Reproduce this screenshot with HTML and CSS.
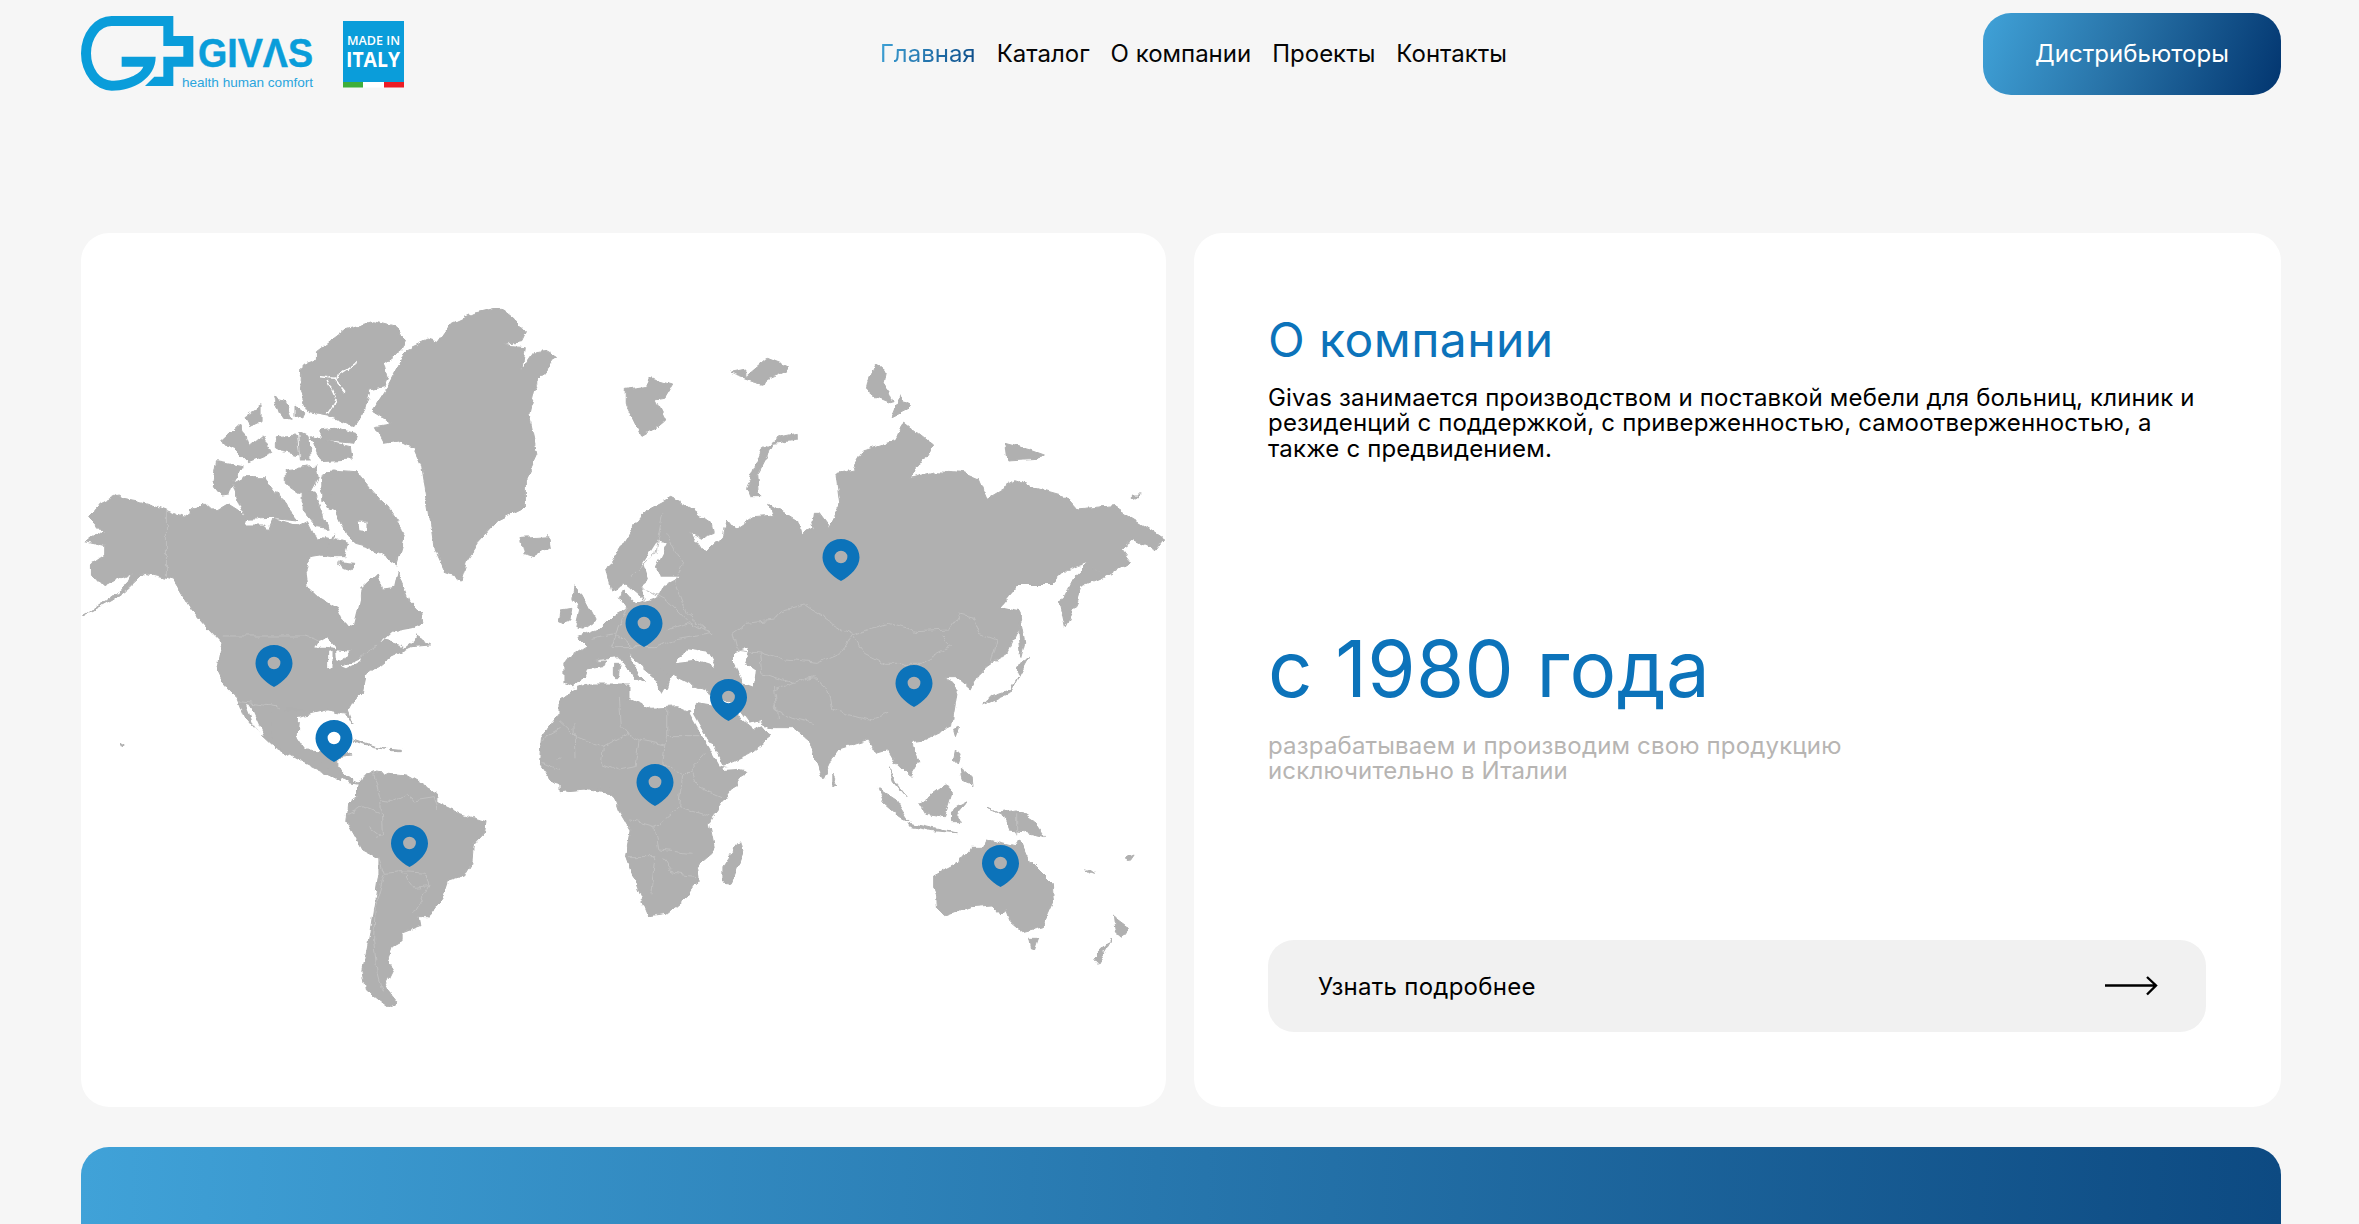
FILE: index.html
```html
<!DOCTYPE html>
<html lang="ru">
<head>
<meta charset="utf-8">
<title>Givas</title>
<link rel="stylesheet" href="styles.css">
</head>
<body>
<div class="page">
  <header class="header">
    <svg class="logo" viewBox="81 0 323 108" aria-label="Givas">
      <g transform="translate(75 10) scale(.33333)">
        <path class="logo-blue" d="M295,18 H110 A92,112 0 0 0 110,242 C175,242 242,205 242,140 H140 V170 H205 C195,195 150,212 110,212 A62,82 0 0 1 110,48 H265 V108 H325 V140 H265 V200 H238 L210,228 H295 V170 H355 V78 H295 Z"/>
      </g>
      <text class="logo-name" x="198" y="67" textLength="115" lengthAdjust="spacingAndGlyphs">GIVΛS</text>
      <text class="logo-tag" x="182" y="87" textLength="131" lengthAdjust="spacingAndGlyphs">health human comfort</text>
      <rect class="logo-blue-b" x="343" y="21" width="61" height="61"/>
      <rect class="flag-g" x="343" y="82" width="20" height="5.5"/>
      <rect class="flag-w" x="363" y="82" width="21" height="5.5"/>
      <rect class="flag-r" x="384" y="82" width="20" height="5.5"/>
      <text class="made" x="347" y="45" textLength="53" lengthAdjust="spacingAndGlyphs">MADE IN</text>
      <text class="italy" x="346" y="67" textLength="54" lengthAdjust="spacingAndGlyphs">ITALY</text>
    </svg>
    <nav class="nav">
      <a class="nav-link nav-active">Главная</a>
      <a class="nav-link">Каталог</a>
      <a class="nav-link">О компании</a>
      <a class="nav-link">Проекты</a>
      <a class="nav-link">Контакты</a>
    </nav>
    <a class="dist-btn">Дистрибьюторы</a>
  </header>

  <main class="cards">
    <section class="card map-card">
      <svg class="map" viewBox="81 233 1085 874">
        <defs>
          <filter id="coast" x="0" y="0" width="100%" height="100%" filterUnits="objectBoundingBox">
            <feTurbulence type="fractalNoise" baseFrequency="0.09" numOctaves="3" seed="4" result="n"/>
            <feDisplacementMap in="SourceGraphic" in2="n" scale="7" xChannelSelector="R" yChannelSelector="G"/>
          </filter>
          <path id="pin" fill-rule="evenodd" d="M18.5,0 C29,0 37,8 37,18.5 C37,28 28,37 18.5,42 C9,37 0,28 0,18.5 C0,8 8,0 18.5,0 Z M18.5,11.8 A6.4,6.2 0 1 0 18.5,24.2 A6.4,6.2 0 1 0 18.5,11.8 Z"/>
        </defs>

        <g class="world">
        <!-- Americas / Arctic, upper region -->
        <g transform="translate(70 280) scale(.35714 .33333)">
          <g class="land">
            <polygon points="1190,85 1215,90 1245,115 1278,155 1265,185 1210,195 1275,200 1265,270 1300,215 1330,212 1362,232 1320,290 1300,330 1285,400 1310,520 1275,600 1275,680 1200,720 1140,790 1115,830 1095,897 1050,880 1020,810 1005,690 985,560 960,500 925,482 880,490 855,440 900,432 845,395 890,320 915,270 940,210 1000,180 1030,190 1070,130 1130,100"/>
            <polygon points="690,215 770,150 850,125 905,140 942,175 930,205 880,245 890,290 880,320 840,330 825,390 795,440 720,405 670,395 645,335 650,255 690,240"/>
            <polygon points="735,570 800,575 850,640 890,680 940,760 915,855 880,830 835,800 800,790 775,765 760,725 745,690 720,680 700,630"/>
            <polygon points="715,770 780,790 770,830 730,830 700,825"/>
            <polygon points="700,450 740,445 800,460 795,490 700,480"/>
            <polygon points="685,475 785,500 790,540 700,545 675,470"/>
            <polygon points="640,455 670,470 672,540 645,540"/>
            <polygon points="455,610 490,590 545,590 610,680 640,720 560,712 490,715 470,660"/>
            <polygon points="410,545 485,560 460,600 445,645 420,648 398,620"/>
            <polygon points="425,485 475,435 490,470 500,500 540,465 565,520 500,548 460,505"/>
            <polygon points="570,352 600,360 622,418 590,410"/>
            <polygon points="490,410 535,380 535,425 505,440"/>
            <polygon points="630,375 660,400 655,420 630,410"/>
            <polygon points="575,470 635,465 640,525 600,515 575,500"/>
            <polygon points="600,570 690,558 695,590 670,640 640,640 600,610"/>
            <polygon points="650,630 685,640 710,710 720,745 690,740 650,690"/>
            <polygon points="705,590 740,570 730,650 705,665"/>
            <polygon points="55,712 85,672 135,645 150,655 200,665 250,682 270,690 315,710 345,685 380,668 405,692 440,670 470,690 495,715 490,735 545,735 555,755 570,715 640,738 665,725 690,780 720,775 745,765 725,790 700,825 670,830 660,880 665,920 690,945 750,985 770,1030 795,1035 812,960 815,925 860,880 875,925 905,920 915,870 950,960 985,1000 988,1030 945,1050 1010,1095 960,1100 900,1130 860,1165 825,1190 815,1245 775,1285 790,1330 775,1300 720,1290 640,1310 635,1380 670,1420 715,1430 735,1440 755,1500 640,1440 570,1400 535,1365 530,1360 490,1310 470,1255 430,1215 410,1170 425,1090 380,1040 340,990 290,900 210,880 165,925 120,960 35,1010 100,965 150,925 170,880 130,900 95,920 60,880 60,850 100,820 100,800 40,785 70,760 100,765 75,735"/>
            <polygon points="1260,775 1340,770 1345,800 1300,830 1270,820"/>
          </g>
          <g class="water">
            <polygon points="660,880 700,830 760,860 800,880 812,960 795,1035 770,1030 750,985 690,945 665,920"/>
            <polygon points="875,925 905,885 915,870 905,920 885,925"/>
            <polygon points="685,1095 720,1072 745,1105 715,1100 700,1100"/>
            <polygon points="720,1115 735,1112 735,1160 720,1165"/>
            <polygon points="748,1108 785,1112 760,1145 750,1140"/>
            <polygon points="760,1160 815,1132 812,1140 770,1165"/>
            <polygon points="870,1090 905,1055 980,1040 965,1080 930,1110 915,1085 880,1075"/>
            <polygon points="490,1275 505,1280 542,1368 528,1362 510,1330"/>
            <polygon points="805,725 830,725 830,750 808,748"/>
          </g>
          <g class="land">
            <polygon points="750,845 795,850 790,870 750,855"/>
          </g>
          <path class="gap" d="M700,290 L740,295 L800,250 M740,295 L770,335 M720,300 L745,360 L720,400"/>
          <path class="border" d="M270,690 V890 M425,1068 H655 L700,1085 M860,1095 L810,1130 M475,1265 L545,1275 L580,1280 L620,1320"/>
        </g>

        <!-- Central and South America, west Africa -->
        <g transform="translate(70 640) scale(.35714 .33333)">
          <g class="land">
            <polygon points="570,320 640,350 680,350 740,400 780,425 805,430 750,385 750,350 790,345 760,335 700,332 660,330 635,290 640,225 660,210 600,210 560,200"/>
            <polygon points="795,298 850,318 885,325 850,320 800,305"/>
            <polygon points="895,325 925,328 925,332 895,332"/>
            <polygon points="140,310 152,318 145,322"/>
            <polygon points="805,420 850,395 940,405 1030,460 1030,490 1090,520 1165,545 1160,580 1130,615 1125,670 1105,705 1060,720 1045,770 1005,830 975,830 980,860 930,880 930,905 905,920 890,965 905,985 880,1040 915,1085 890,1100 830,1050 820,990 840,880 865,700 865,655 820,630 775,545 780,490 805,470"/>
            <polygon points="1410,150 1450,135 1568,135 1568,520 1540,490 1510,460 1450,450 1395,455 1350,425 1315,370 1320,290 1375,215"/>
            <polygon points="1384,65 1500,60 1490,80 1430,90 1410,140 1385,130"/>
          </g>
          <path class="border" d="M850,400 L870,480 L875,590 L860,595 M870,480 L905,485 L950,460 L960,480 L1020,470 M1020,470 L1030,510 M780,520 L820,500 L865,520 M835,560 L870,590 M865,655 L880,700 L930,695 L965,745 L1005,740 L965,815 M880,700 L855,800 L850,900 L860,1000 L875,1060 M930,695 L995,700 L1005,740 M1320,300 L1400,250 L1410,350 L1360,355 M1400,250 L1495,320 L1568,260 M1495,320 L1490,360 L1568,380 M1320,370 L1390,400 L1440,360 L1490,360 M1395,400 L1400,450 M1435,400 L1435,445 M1470,390 L1475,440"/>
        </g>

        <!-- Eurasia -->
        <g transform="translate(560 300) scale(.39541 .33333)">
          <g class="land">
            <polygon points="118,810 180,690 220,630 280,592 310,610 385,670 390,700 358,715 330,695 365,760 410,710 420,660 440,690 490,650 540,645 530,610 600,660 610,700 640,680 630,640 655,640 680,680 710,610 700,520 740,510 770,450 850,420 870,365 945,435 885,535 950,515 1020,520 1060,540 1080,595 1150,545 1220,570 1280,590 1310,630 1400,620 1470,670 1528,715 1505,750 1450,720 1420,745 1445,785 1380,830 1335,790 1280,810 1240,855 1160,855 1115,920 1165,935 1160,980 1130,1060 1090,1090 1060,1120 1040,1170 1000,1130 975,1130 1005,1170 1000,1210 990,1280 920,1320 890,1325 905,1390 885,1430 850,1390 830,1350 800,1360 780,1320 700,1350 665,1440 640,1360 630,1320 590,1280 530,1280 505,1262 480,1270 445,1215 350,1165 285,1125 260,1180 230,1120 170,1060 215,1150 190,1135 150,1070 100,1075 75,1085 65,1130 35,1160 10,1150 10,1085 70,1040 45,1010 100,985 130,950 170,925 150,890 160,870 190,910 215,900 165,850 130,870"/>
            <polygon points="35,860 55,880 90,960 60,985 40,980 50,930 30,900"/>
            <polygon points="5,930 30,925 25,960 0,970"/>
            <polygon points="165,268 215,260 225,235 285,255 265,295 240,300 265,360 245,380 205,408 165,310"/>
            <polygon points="430,220 470,210 470,230 500,200 525,175 578,200 570,215 530,235 510,250 480,240"/>
            <polygon points="778,250 800,190 825,215 820,250 840,310 800,290 775,265"/>
            <polygon points="860,290 882,325 840,350"/>
            <polygon points="600,400 600,420 540,430 500,520 505,590 480,590 472,565 490,510 510,450 560,410"/>
            <polygon points="1125,430 1190,450 1225,465 1210,475 1130,480"/>
            <polygon points="1445,585 1470,585 1445,597"/>
            <polygon points="250,1105 280,1130 270,1170 250,1140"/>
            <polygon points="140,1090 155,1090 150,1130 140,1130"/>
          </g>
          <g class="water">
            <polygon points="245,725 270,730 240,800 250,830 305,830 265,855 250,890 215,905 205,860 225,840 210,790"/>
            <polygon points="295,1090 320,1045 375,1055 395,1100 345,1082"/>
            <polygon points="440,1060 480,1040 470,1090 495,1110 490,1160 465,1150 440,1090"/>
            <polygon points="600,620 640,540 655,540 640,660 610,700"/>
            <polygon points="1115,920 1160,855 1240,855 1280,810 1335,790 1300,830 1265,910 1275,980 1200,1070 1165,1075 1175,1030 1165,935"/>
          </g>
          <g class="land">
            <polygon points="1335,790 1380,830 1320,860 1310,900 1278,980 1265,910 1300,830"/>
            <polygon points="1163,945 1175,1030 1165,1075 1158,1000"/>
            <polygon points="1185,1075 1150,1100 1160,1130 1140,1170 1090,1190 1070,1215 1140,1180 1160,1130"/>
          </g>
          <path class="border" d="M435,1000 L470,970 L540,960 L560,935 L620,915 L680,965 L740,1005 L790,985 L830,970 L900,995 L985,990 L1010,945 L1045,955 L1060,1000 L1105,1020 L1090,1090 M740,1005 L770,1060 L820,1090 L910,1090 L990,1040 L965,1010 M435,1000 L445,1050 L510,1060 L570,1080 L650,1090 L710,1060 L740,1005 M505,1060 L510,1120 L590,1150 L640,1130 L680,1170 L690,1230 L780,1260 L830,1240 M545,1180 L550,1260 M590,1150 L540,1170 M270,700 L310,790 L290,850 L320,940 L380,1000 L330,965 L270,990 M200,860 L280,910 L320,960 M170,925 L130,1040 L240,1040 L290,1020 L385,1000 M260,640 L240,760 L180,830 M80,1015 L140,1000 L180,1040"/>
        </g>

        <!-- Africa, Asia south, Oceania -->
        <g transform="translate(560 640) scale(.39541 .33333)">
          <g class="land">
            <polygon points="0,180 35,150 160,140 160,170 230,205 300,200 330,215 355,270 410,380 470,395 440,440 390,520 378,550 390,620 385,640 345,680 350,720 320,770 270,820 225,828 195,740 168,650 180,570 150,510 130,440 0,455"/>
            <polygon points="340,225 345,190 445,210 460,240 490,270 510,255 535,290 480,340 412,375 400,345"/>
            <polygon points="455,605 462,640 435,730 412,725 412,680 440,630"/>
            <polygon points="835,380 860,450 875,470 845,425"/>
            <polygon points="805,445 850,480 885,545 860,530 820,490"/>
            <polygon points="885,550 960,570 1005,578 940,572 890,560"/>
            <polygon points="910,490 975,435 990,455 970,530 925,520"/>
            <polygon points="990,510 1030,485 1005,520 1015,545 990,545"/>
            <polygon points="1000,330 1012,345 1005,372 995,360"/>
            <polygon points="1015,385 1040,410 1042,440 1020,420"/>
            <polygon points="690,405 703,435 690,440"/>
            <polygon points="995,268 1008,262 1000,290"/>
            <polygon points="1080,505 1110,520 1155,510 1200,545 1225,590 1170,575 1135,570 1120,525"/>
            <polygon points="1400,830 1440,865 1420,895 1405,880"/>
            <polygon points="1395,900 1360,970 1350,955"/>
            <polygon points="945,705 1010,665 1040,625 1070,625 1080,600 1150,620 1165,595 1190,665 1245,730 1248,785 1220,860 1170,875 1140,845 1130,810 1115,825 1095,795 1040,800 970,830 958,815 955,770 945,740"/>
            <polygon points="1185,895 1210,895 1200,930 1190,925"/>
            <polygon points="1332,683 1352,700 1340,695"/>
            <polygon points="1432,655 1452,645 1442,662"/>
          </g>
          <path class="gap-thick" d="M332,218 L408,378 M414,388 L492,380"/>
          <path class="border" d="M0,245 L40,290 L110,320 L170,280 L200,300 L265,315 L270,290 V205 M270,290 H355 M150,170 L155,260 L170,280 M35,250 L38,355 M110,320 L105,370 L150,390 L190,380 L200,300 M265,315 L260,370 L310,410 L330,385 L365,340 M310,410 L300,500 L240,560 L180,540 M330,385 L350,440 L410,470 M300,500 L380,530 M240,560 L250,630 L330,640 M170,650 H240 L230,760 M260,655 L290,700 L340,710 M1155,520 V580 M540,140 L545,210 L590,235 L640,250"/>
        </g>
        </g>

        <g class="pins">
          <use href="#pin" x="255.5" y="645"/>
          <use href="#pin" x="315.5" y="720"/>
          <use href="#pin" x="391" y="825"/>
          <use href="#pin" x="625.5" y="605"/>
          <use href="#pin" x="822.5" y="539"/>
          <use href="#pin" x="710" y="679"/>
          <use href="#pin" x="895.5" y="665"/>
          <use href="#pin" x="636.5" y="764"/>
          <use href="#pin" x="982" y="845"/>
        </g>
      </svg>
    </section>

    <section class="card about-card">
      <div class="about-top">
        <h2 class="about-title">О компании</h2>
        <p class="about-text">Givas занимается производством и поставкой мебели для больниц, клиник и резиденций с поддержкой, с приверженностью, самоотверженностью, а также с предвидением.</p>
      </div>
      <div class="about-mid">
        <div class="about-year">с 1980 года</div>
        <p class="about-note">разрабатываем и производим свою продукцию<br>исключительно в Италии</p>
      </div>
      <a class="more-btn">
        <span>Узнать подробнее</span>
        <svg class="arrow" viewBox="0 0 53 20"><path d="M0,9.5 H51 M42,1 L51,9.5 L42,18.5"/></svg>
      </a>
    </section>
  </main>

  <section class="banner"></section>
</div>
</body>
</html>
```

FILE: styles.css
```css
* { box-sizing: border-box; }
html, body { margin: 0; height: 100%; overflow: hidden; background: #f6f6f6; }
body { font-family: Inter, "Noto Sans", sans-serif; color: #000; }

.page { height: 1224px; overflow: hidden; padding: 0 78px 0 81px; }

.header { display: flex; align-items: center; justify-content: space-between; height: 108px; }
.logo { display: block; width: 323px; height: 108px; flex: none; }
.logo-blue { fill: #0a9dda; }
.logo-blue-b { fill: #0a9dda; }
.logo-name { font: 700 41px "Liberation Sans", sans-serif; fill: #0a9dda; stroke: #0a9dda; stroke-width: .5; }
.logo-tag { font: 400 13px "Liberation Sans", sans-serif; fill: #2aa5dd; }
.made { font: 600 12px "Open Sans", sans-serif; fill: #fff; }
.italy { font: 700 21px "Open Sans", sans-serif; fill: #fff; }
.flag-g { fill: #3fae3a; }
.flag-w { fill: #fff; }
.flag-r { fill: #ec1c24; }

.nav { display: flex; gap: 21px; }
.nav-link { font-size: 24px; line-height: 30px; letter-spacing: 0; color: #050505; }
.nav-active {
  background: linear-gradient(110deg, #3fa2d6, #0b4a86);
  -webkit-background-clip: text;
  background-clip: text;
  color: transparent;
}

.dist-btn {
  display: flex; align-items: center; justify-content: center;
  width: 298px; height: 82px; padding-bottom: 2px;
  border-radius: 28px;
  background: linear-gradient(110deg, #40a2d8 0%, #2873a8 45%, #02356f 100%);
  color: #fff; font-size: 24px; letter-spacing: 0.05px;
}

.cards { display: grid; grid-template-columns: 1085px 1087px; gap: 28px; margin-top: 125px; height: 874px; }
.card { background: #fff; border-radius: 28px; overflow: hidden; }

.map { display: block; width: 100%; height: 100%; }
.world { filter: url(#coast); }
.land polygon { fill: #b0b0b0; stroke: #b0b0b0; stroke-width: 1; vector-effect: non-scaling-stroke; stroke-linejoin: round; }
.water polygon { fill: #fff; }
.gap { fill: none; stroke: #fff; stroke-width: 1.5; vector-effect: non-scaling-stroke; }
.gap-thick { fill: none; stroke: #fff; stroke-width: 3.5; vector-effect: non-scaling-stroke; }
.border { fill: none; stroke: #c0c0c0; stroke-width: 1; vector-effect: non-scaling-stroke; }
.pins { fill: #0c73ba; }

.about-card { display: flex; flex-direction: column; justify-content: space-between; padding: 78px 75px 75px 74px; }
.about-title { margin: 0 0 15.5px; font-size: 48px; line-height: 58px; font-weight: 400; letter-spacing: 0.45px; color: #0c73ba; }
.about-text { margin: 0; font-size: 24px; line-height: 25.5px; letter-spacing: 0.18px; }
.about-mid { margin-top: 4.5px; }
.about-year { font-size: 78px; line-height: 92px; letter-spacing: 0.35px; color: #0c73ba; }
.about-note { margin: 18px 0 0; font-size: 24px; line-height: 25px; letter-spacing: 0.17px; color: #b7b5b3; }

.more-btn {
  display: flex; align-items: center; justify-content: space-between;
  height: 92px; padding: 0 48px 0 50px;
  border-radius: 26px; background: #f1f1f1;
  font-size: 24px; letter-spacing: 0.26px;
}
.arrow { width: 53px; height: 20px; }
.arrow path { fill: none; stroke: #000; stroke-width: 2.4; }

.banner { margin-top: 40px; height: 77px; border-radius: 28px 28px 0 0; background: linear-gradient(92deg, #40a2d8 0%, #0d4a82 100%); }
```
